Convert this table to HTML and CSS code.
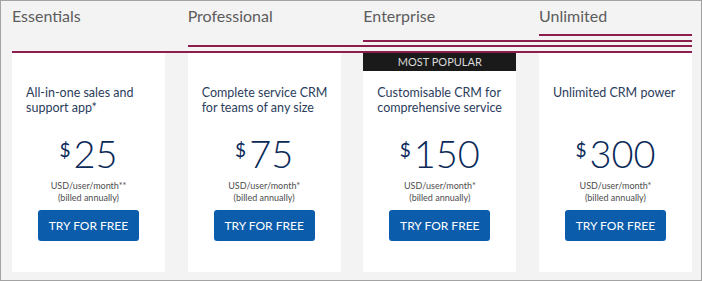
FILE: index.html
```html
<!DOCTYPE html>
<html lang="en">
<head>
<meta charset="utf-8">
<title>Pricing</title>
<link rel="stylesheet" href="styles.css">
</head>
<body>
<div class="frame">
  <div class="tabs">
    <div class="tab tab-1">
      <div class="tab-label">Essentials</div>
      <div class="tab tab-2">
        <div class="tab-label">Professional</div>
        <div class="tab tab-3">
          <div class="tab-label">Enterprise</div>
          <div class="tab tab-4">
            <div class="tab-label">Unlimited</div>
          </div>
        </div>
      </div>
    </div>
  </div>
  <div class="cards">
    <div class="card">
      <p class="desc">All-in-one sales and support app*</p>
      <div class="price"><span class="cur">$</span><span class="amt">25</span></div>
      <p class="terms">USD/user/month**<br>(billed annually)</p>
      <button class="cta">TRY FOR FREE</button>
    </div>
    <div class="card">
      <p class="desc">Complete service CRM for teams of any size</p>
      <div class="price"><span class="cur">$</span><span class="amt">75</span></div>
      <p class="terms">USD/user/month*<br>(billed annually)</p>
      <button class="cta">TRY FOR FREE</button>
    </div>
    <div class="card card-popular">
      <div class="badge">MOST POPULAR</div>
      <p class="desc">Customisable CRM for comprehensive service</p>
      <div class="price"><span class="cur">$</span><span class="amt">150</span></div>
      <p class="terms">USD/user/month*<br>(billed annually)</p>
      <button class="cta">TRY FOR FREE</button>
    </div>
    <div class="card">
      <p class="desc">Unlimited CRM power</p>
      <div class="price"><span class="cur">$</span><span class="amt">300</span></div>
      <p class="terms">USD/user/month*<br>(billed annually)</p>
      <button class="cta">TRY FOR FREE</button>
    </div>
  </div>
</div>
</body>
</html>
```
FILE: styles.css
```css
* { box-sizing: border-box; }
html, body { margin: 0; padding: 0; }
body {
  width: 702px;
  height: 281px;
  font-family: Lato, "Open Sans", sans-serif;
  background: #fff;
}
.frame {
  width: 702px;
  height: 281px;
  border: 1px solid #a3a3a3;
  background: #f3f3f3;
  padding: 5px 9px 0 11px;
  display: flex;
  flex-direction: column;
}
.tabs { width: 680px; }
.tab {
  display: flex;
  align-items: flex-start;
  border-bottom: 2px solid #8c1d4c;
}
.tab-1 { padding-bottom: 4px; }
.tab-2 { flex: 1; padding-bottom: 3px; }
.tab-3 { flex: 1; padding-bottom: 4px; }
.tab-4 { flex: 1; padding-bottom: 8px; }
.tab-label {
  width: 175.67px;
  flex: none;
  font-size: 16px;
  line-height: 20px;
  color: #5c5c5c;
}
.tab-4 .tab-label { width: auto; }
.cards {
  display: grid;
  grid-template-columns: repeat(4, 153px);
  column-gap: 22.67px;
  width: 680px;
}
.card {
  background: #fff;
  height: 219px;
  padding-top: 32px;
  display: flex;
  flex-direction: column;
  align-items: center;
}
.card-popular { padding-top: 0; }
.badge {
  align-self: stretch;
  margin-bottom: 14px;
  height: 18px;
  background: #1a1a1a;
  color: #d9d9d9;
  font-size: 11px;
  line-height: 18px;
  text-align: center;
}
.desc {
  align-self: stretch;
  margin: 0;
  height: 30px;
  padding: 0 6px 0 14px;
  font-size: 12.5px;
  line-height: 15px;
  color: #2b3d5c;
}
.price {
  margin-top: 19px;
  display: flex;
  align-items: flex-start;
  color: #0b2a5a;
  height: 38px;
}
.cur {
  font-size: 19px;
  line-height: 19px;
  margin-top: 6px;
  margin-right: 3px;
}
.amt {
  font-size: 38px;
  line-height: 38px;
  font-weight: 300;
}
.terms {
  margin: 8px 0 0;
  text-align: center;
  font-size: 9px;
  line-height: 11.6px;
  color: #4d4d4d;
}
.cta {
  margin-top: 7px;
  width: 101px;
  height: 31px;
  border: none;
  border-radius: 3px;
  background: #0b5cab;
  color: #fff;
  font-family: Lato, "Open Sans", sans-serif;
  font-size: 12px;
  padding: 0;
}
```
